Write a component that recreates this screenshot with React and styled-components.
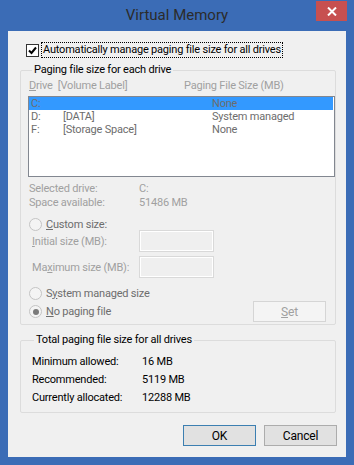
import React from "react";
import styled, { createGlobalStyle } from "styled-components";

const GlobalStyle = createGlobalStyle`
  html, body {
    margin: 0;
    padding: 0;
    background: #3b6cb6;
  }
  body {
    font-family: Roboto, "Noto Sans", sans-serif;
    font-size: 11px;
    letter-spacing: -0.2px;
    color: #000;
  }
`;

const Window = styled.div`
  width: 354px;
  height: 465px;
  box-sizing: border-box;
  background: #3b6cb6;
  padding: 0 8px 8px 8px;
  display: flex;
  flex-direction: column;
`;

const TitleBar = styled.div`
  height: 31px;
  display: grid;
  grid-template-columns: 1fr auto 1fr;
`;

const Title = styled.div`
  grid-column: 2;
  align-self: center;
  font-size: 15px;
  letter-spacing: 0;
  color: #2b2b2b;
  padding-bottom: 1px;
`;

const CloseButton = styled.div`
  grid-column: 3;
  justify-self: end;
  align-self: start;
  margin: 1px -1px 0 0;
  width: 31px;
  height: 20px;
  background: #c75050;
  display: flex;
  align-items: center;
  justify-content: center;
`;

const Client = styled.div`
  flex: 1;
  background: #f0f0f0;
  display: flex;
  flex-direction: column;
`;

const CheckRow = styled.div`
  display: flex;
  align-items: center;
  margin: 11px 0 0 18px;
  height: 16px;
`;

const Box = styled.div`
  width: 11px;
  height: 11px;
  border: 1px solid #333;
  background: #fff;
  display: flex;
  align-items: center;
  justify-content: center;
`;

const FocusLabel = styled.span`
  margin-left: 2px;
  border: 1px dotted #000;
  line-height: 14px;
  padding: 0 1px;
`;

const Group = styled.fieldset`
  margin: ${({ $top }) => $top}px 10px 0 12px;
  border: 1px solid #dcdcdc;
  border-radius: 2px;
  padding: 0 0 0 ${({ $left }) => $left}px;
  min-width: 0;
  height: ${({ $height }) => $height}px;
  box-sizing: border-box;
`;

const Legend = styled.legend`
  padding: 0 2px;
  margin-left: 4px;
  line-height: 16px;
  color: #000;
`;

const HeaderRow = styled.div`
  display: grid;
  grid-template-columns: 155px 1fr;
  line-height: 14px;
  color: #a0a0a0;
  padding-left: 1px;
  margin-top: 1px;
  white-space: nowrap;
`;

const ListBox = styled.div`
  margin-top: 3px;
  height: 81px;
  box-sizing: border-box;
  border: 1px solid #828790;
  background: #fff;
`;

const ListRow = styled.div`
  display: grid;
  grid-template-columns: 32px 149px 1fr;
  height: 13px;
  line-height: 13px;
  padding-left: 2px;
  margin-right: 1px;
  color: #6d6d6d;
  background: ${({ $selected }) => ($selected ? "#3399ff" : "transparent")};
`;

const InfoList = styled.div`
  margin-top: 5px;
`;

const InfoRow = styled.div`
  display: grid;
  grid-template-columns: 110px 1fr;
  line-height: 14px;
  color: #a0a0a0;
  padding-left: 1px;
`;

const RadioRow = styled.div`
  display: flex;
  align-items: center;
  height: 16px;
  margin-top: ${({ $top }) => $top}px;
  padding-left: 1px;
  color: #6d6d6d;
  gap: 4px;
  white-space: nowrap;
`;

const Radio = styled.div`
  width: 11px;
  height: 11px;
  border-radius: 50%;
  border: 1px solid #c4c4c4;
  background: #f4f4f4;
  display: flex;
  align-items: center;
  justify-content: center;

  &::after {
    content: "";
    display: ${({ $checked }) => ($checked ? "block" : "none")};
    width: 6px;
    height: 6px;
    border-radius: 50%;
    background: #7a7a7a;
  }
`;

const FieldRow = styled.div`
  display: grid;
  grid-template-columns: 107px 75px;
  align-items: center;
  margin-top: ${({ $top }) => $top}px;
  padding-left: 4px;
  color: #a0a0a0;
  white-space: nowrap;
`;

const TextField = styled.div`
  height: 22px;
  box-sizing: border-box;
  border: 1px solid #d9d9d9;
  box-shadow: inset 0 0 0 1px #ffffff;
  background: #efefef;
`;

const ChoiceRow = styled.div`
  display: flex;
  align-items: center;
  justify-content: space-between;
  padding-right: 9px;
`;

const Button = styled.div`
  width: 73px;
  height: 21px;
  box-sizing: border-box;
  border: 1px solid
    ${({ $variant }) =>
      $variant === "default" ? "#3c7fb1" : $variant === "disabled" ? "#d5d5d5" : "#acacac"};
  background: ${({ $variant }) => ($variant === "disabled" ? "#f4f4f4" : "#e1e1e1")};
  color: ${({ $variant }) => ($variant === "disabled" ? "#a0a0a0" : "#000")};
  display: flex;
  align-items: center;
  justify-content: center;
  line-height: 14px;
  font-size: 12px;
`;

const TotalList = styled.div`
  margin-top: 5px;
`;

const TotalRow = styled.div`
  display: grid;
  grid-template-columns: 110px 1fr;
  line-height: 18px;
  padding-left: 2px;
  white-space: nowrap;
`;

const ButtonBar = styled.div`
  display: flex;
  justify-content: flex-end;
  gap: 8px;
  margin: 12px 9px 0 0;
`;

const U = styled.span`
  text-decoration: underline;
`;

const drives = [
  { letter: "C:", label: "", size: "None", selected: true },
  { letter: "D:", label: "[DATA]", size: "System managed" },
  { letter: "F:", label: "[Storage Space]", size: "None" },
];

const totals = [
  ["Minimum allowed:", "16 MB"],
  ["Recommended:", "5119 MB"],
  ["Currently allocated:", "12288 MB"],
];

export default function App() {
  return (
    <>
      <GlobalStyle />
      <Window>
        <TitleBar>
          <Title>Virtual Memory</Title>
          <CloseButton>
            <svg width="10" height="9" viewBox="0 0 10 9">
              <path d="M1 0.5 L9 8.5 M9 0.5 L1 8.5" stroke="#fff" strokeWidth="2" />
            </svg>
          </CloseButton>
        </TitleBar>
        <Client>
          <CheckRow>
            <Box>
              <svg width="9" height="9" viewBox="0 0 9 9">
                <path d="M1 4.5 L3.5 7 L8 1.5" stroke="#000" strokeWidth="2" fill="none" />
              </svg>
            </Box>
            <FocusLabel>Automatically manage paging file size for all drives</FocusLabel>
          </CheckRow>

          <Group $top={4} $left={7} $height={263}>
            <Legend>Paging file size for each drive</Legend>
            <HeaderRow>
              <span>
                <U>D</U>rive&nbsp;&nbsp;[Volume Label]
              </span>
              <span>Paging File Size (MB)</span>
            </HeaderRow>
            <ListBox>
              {drives.map((d) => (
                <ListRow key={d.letter} $selected={d.selected}>
                  <span>{d.letter}</span>
                  <span>{d.label}</span>
                  <span>{d.size}</span>
                </ListRow>
              ))}
            </ListBox>
            <InfoList>
              <InfoRow>
                <span>Selected drive:</span>
                <span>C:</span>
              </InfoRow>
              <InfoRow>
                <span>Space available:</span>
                <span>51486 MB</span>
              </InfoRow>
            </InfoList>
            <RadioRow $top={6}>
              <Radio />
              <span>
                <U>C</U>ustom size:
              </span>
            </RadioRow>
            <FieldRow $top={-2}>
              <span>
                <U>I</U>nitial size (MB):
              </span>
              <TextField />
            </FieldRow>
            <FieldRow $top={4}>
              <span>
                Ma<U>x</U>imum size (MB):
              </span>
              <TextField />
            </FieldRow>
            <RadioRow $top={7}>
              <Radio />
              <span>
                S<U>y</U>stem managed size
              </span>
            </RadioRow>
            <ChoiceRow>
              <RadioRow $top={0}>
                <Radio $checked />
                <span>
                  <U>N</U>o paging file
                </span>
              </RadioRow>
              <Button $variant="disabled">
                <span>
                  <U>S</U>et
                </span>
              </Button>
            </ChoiceRow>
          </Group>

          <Group $top={7} $left={9} $height={81}>
            <Legend>Total paging file size for all drives</Legend>
            <TotalList>
              {totals.map(([k, v]) => (
                <TotalRow key={k}>
                  <span>{k}</span>
                  <span>{v}</span>
                </TotalRow>
              ))}
            </TotalList>
          </Group>

          <ButtonBar>
            <Button $variant="default">OK</Button>
            <Button>Cancel</Button>
          </ButtonBar>
        </Client>
      </Window>
    </>
  );
}
